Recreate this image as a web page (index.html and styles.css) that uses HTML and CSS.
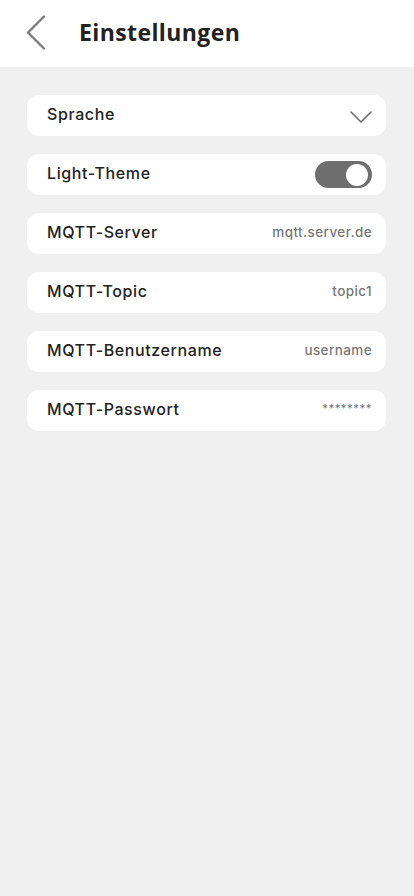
FILE: index.html
```html
<!DOCTYPE html>
<html lang="de">
<head>
<meta charset="utf-8">
<title>Einstellungen</title>
<link rel="stylesheet" href="styles.css">
</head>
<body>
<header class="header">
  <svg class="back" width="22" height="36" viewBox="0 0 22 36"><path d="M19 1.5 L3 17.5 L19 33.5" fill="none" stroke="#7a7a7a" stroke-width="2.4" stroke-linecap="round" stroke-linejoin="round"/></svg>
  <h1 class="title">Einstellungen</h1>
</header>
<main class="list">
  <div class="row">
    <span class="label">Sprache</span>
    <svg class="chev" width="24" height="14" viewBox="0 0 24 14"><path d="M2 2 L12 12 L22 2" fill="none" stroke="#6e6e6e" stroke-width="1.6" stroke-linecap="round" stroke-linejoin="round"/></svg>
  </div>
  <div class="row">
    <span class="label">Light-Theme</span>
    <span class="toggle"><span class="knob"></span></span>
  </div>
  <div class="row">
    <span class="label">MQTT-Server</span>
    <span class="value">mqtt.server.de</span>
  </div>
  <div class="row">
    <span class="label">MQTT-Topic</span>
    <span class="value">topic1</span>
  </div>
  <div class="row">
    <span class="label">MQTT-Benutzername</span>
    <span class="value">username</span>
  </div>
  <div class="row">
    <span class="label">MQTT-Passwort</span>
    <span class="value pw">********</span>
  </div>
</main>
</body>
</html>
```
FILE: styles.css
```css
* { box-sizing: border-box; }
html, body { margin: 0; padding: 0; }
body {
  background: #f0f0f0;
  font-family: Inter, "Noto Sans", sans-serif;
  min-height: 896px;
}
.header {
  background: #fff;
  height: 67px;
  display: flex;
  align-items: center;
  padding-left: 25px;
}
.back { display: block; margin-top: -1px; }
.title {
  margin: 0 0 4px 32px;
  font-family: "Open Sans", sans-serif;
  font-weight: 700;
  font-size: 23px;
  color: #222;
  letter-spacing: 0.4px;
}
.list {
  padding: 28px 28px 0 27px;
  display: flex;
  flex-direction: column;
  gap: 18px;
}
.row {
  background: #fff;
  border-radius: 12px;
  height: 41px;
  display: flex;
  align-items: center;
  justify-content: space-between;
  padding: 0 14px 0 20px;
}
.label {
  font-size: 16px;
  font-weight: 500;
  color: #222;
  letter-spacing: 0.6px;
  margin-bottom: 4px;
}
.value {
  font-size: 13.5px;
  font-weight: 500;
  color: #777;
  letter-spacing: 0.4px;
  margin-bottom: 3px;
}
.pw { font-size: 11px; letter-spacing: 0.5px; margin-bottom: 6px; }
.chev { display: block; margin-right: -1px; margin-top: 2px; }
.toggle {
  width: 57px;
  height: 27px;
  border-radius: 14px;
  background: #6e6e6e;
  display: flex;
  align-items: center;
  justify-content: flex-end;
  padding-right: 4px;
}
.knob {
  width: 22px;
  height: 22px;
  border-radius: 50%;
  background: #fff;
}
```
